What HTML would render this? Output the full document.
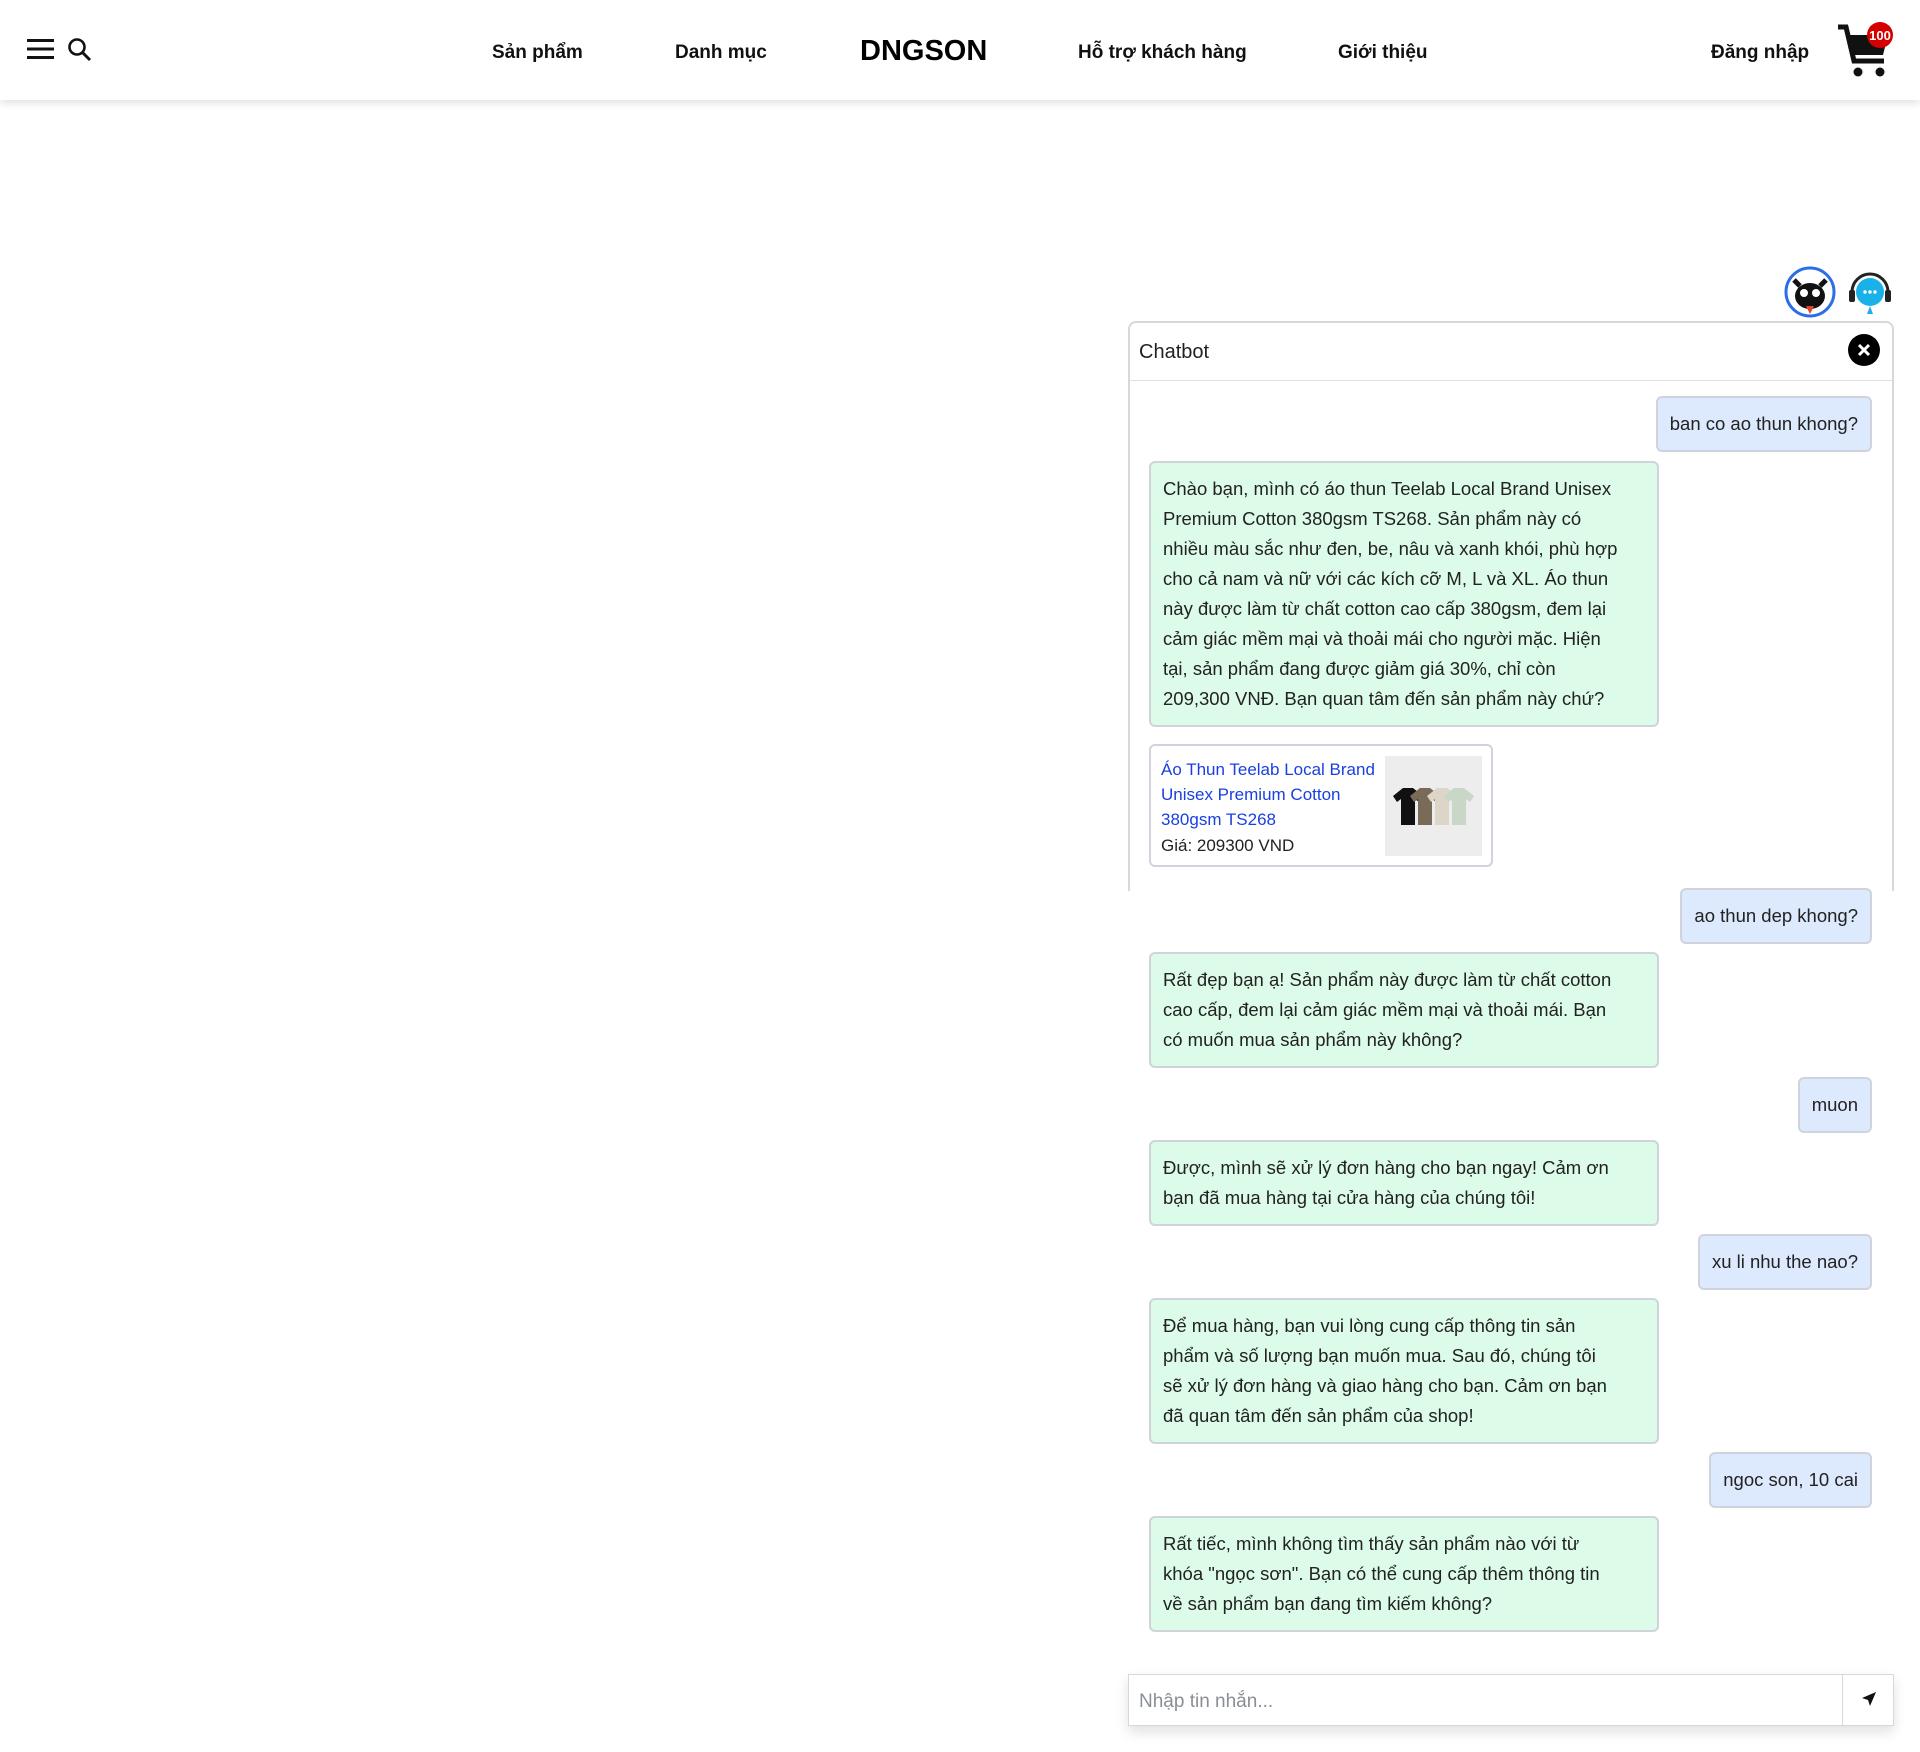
<!DOCTYPE html>
<html><head><meta charset="utf-8">
<style>
*{margin:0;padding:0;box-sizing:border-box}
body{width:1920px;height:1752px;background:#fff;font-family:"Liberation Sans",sans-serif;color:#212529;position:relative;overflow:hidden}
.hdr{position:absolute;left:0;top:0;width:1920px;height:100px;background:#fff;box-shadow:0 3px 8px rgba(0,0,0,.12)}
.nav{position:absolute;top:42px;font-size:19px;font-weight:bold;color:#111;white-space:nowrap}
.abs{position:absolute}
.panel{position:absolute;left:1128px;top:321px;width:766px;height:570px;border:2px solid #d6d8de;border-bottom:none;border-radius:8px 8px 0 0}
.b{position:absolute;font-size:18.5px;line-height:30px;padding:11px 12px;border:2px solid #cfd3dc;border-radius:6px;white-space:nowrap;color:#222}
.bot{background:#dcfbe8;left:1149px;width:510px}
.usr{background:#dde9fd;right:48px}
</style></head><body>
<div class="hdr"></div>
<svg class="abs" style="left:27px;top:38px" width="27" height="22" viewBox="0 0 27 22"><rect y="1" width="27" height="3" fill="#111"/><rect y="9.5" width="27" height="3" fill="#111"/><rect y="18" width="27" height="3" fill="#111"/></svg>
<svg class="abs" style="left:67px;top:37px" width="26" height="26" viewBox="0 0 26 26"><circle cx="10" cy="10" r="7.5" fill="none" stroke="#111" stroke-width="2.6"/><line x1="15.5" y1="15.5" x2="23" y2="23" stroke="#111" stroke-width="3"/></svg>
<div class="nav" style="left:492px">Sản phẩm</div>
<div class="nav" style="left:675px">Danh mục</div>
<div class="nav" style="left:860px;top:35px;font-size:29px;font-weight:600;color:#000">DNGSON</div>
<div class="nav" style="left:1078px">Hỗ trợ khách hàng</div>
<div class="nav" style="left:1338px">Giới thiệu</div>
<div class="nav" style="left:1711px">Đăng nhập</div>
<svg class="abs" style="left:1836px;top:22px" width="60" height="58" viewBox="0 0 60 58"><path d="M2 5h8l8 34h30" fill="none" stroke="#111" stroke-width="5"/><path d="M12 13h40l-5 20H17z" fill="#111"/><circle cx="22" cy="50" r="4.5" fill="#111"/><circle cx="44" cy="50" r="4.5" fill="#111"/><circle cx="44" cy="13" r="13" fill="#d40000"/><text x="44" y="18" font-size="13" font-weight="bold" fill="#fff" text-anchor="middle" font-family="Liberation Sans">100</text></svg>
<svg class="abs" style="left:1784px;top:266px" width="52" height="52" viewBox="0 0 52 52"><circle cx="26" cy="26" r="24" fill="#fff" stroke="#2b6fe6" stroke-width="3"/><path d="M10 14l6 6M42 14l-6 6" stroke="#111" stroke-width="5"/><ellipse cx="26" cy="30" rx="15" ry="13" fill="#111"/><circle cx="20" cy="27" r="4" fill="#fff"/><circle cx="32" cy="27" r="4" fill="#fff"/><path d="M22 40l4 8 4-8z" fill="#e0442a"/></svg>
<svg class="abs" style="left:1846px;top:268px" width="48" height="48" viewBox="0 0 48 48"><path d="M6 24a18 18 0 0 1 36 0" fill="none" stroke="#222" stroke-width="3"/><rect x="3" y="22" width="6" height="12" rx="2" fill="#222"/><rect x="39" y="22" width="6" height="12" rx="2" fill="#222"/><circle cx="24" cy="24" r="14" fill="#1ab0e8"/><path d="M24 38l-3 8h6z" fill="#1ab0e8"/><circle cx="19" cy="24" r="1.7" fill="#fff"/><circle cx="24" cy="24" r="1.7" fill="#fff"/><circle cx="29" cy="24" r="1.7" fill="#fff"/></svg>
<div class="panel"></div>
<div class="abs" style="left:1130px;top:380px;width:762px;height:1px;background:#dfe1e5"></div>
<div class="abs" style="left:1139px;top:341px;font-size:20px;color:#222">Chatbot</div>
<svg class="abs" style="left:1848px;top:334px" width="32" height="32" viewBox="0 0 32 32"><circle cx="16" cy="16" r="16" fill="#000"/><path d="M11 11l10 10M21 11l-10 10" stroke="#fff" stroke-width="3"/></svg>

<div class="b usr" style="top:396px">ban co ao thun khong?</div>
<div class="b bot" style="top:461px">Chào bạn, mình có áo thun Teelab Local Brand Unisex<br>Premium Cotton 380gsm TS268. Sản phẩm này có<br>nhiều màu sắc như đen, be, nâu và xanh khói, phù hợp<br>cho cả nam và nữ với các kích cỡ M, L và XL. Áo thun<br>này được làm từ chất cotton cao cấp 380gsm, đem lại<br>cảm giác mềm mại và thoải mái cho người mặc. Hiện<br>tại, sản phẩm đang được giảm giá 30%, chỉ còn<br>209,300 VNĐ. Bạn quan tâm đến sản phẩm này chứ?</div>
<div class="abs" style="left:1149px;top:744px;width:344px;height:123px;border:2px solid #cfd3dc;border-radius:6px;background:#fff"></div>
<div class="abs" style="left:1161px;top:757px;font-size:17px;line-height:25px;color:#1a3fe0;white-space:nowrap">Áo Thun Teelab Local Brand<br>Unisex Premium Cotton<br>380gsm TS268</div>
<div class="abs" style="left:1161px;top:833px;font-size:17px;line-height:25px;color:#222">Giá: 209300 VND</div>
<svg class="abs" style="left:1385px;top:756px" width="97" height="100" viewBox="0 0 97 100"><rect width="97" height="100" fill="#ededed"/><path d="M8 40l10-8h10l10 8-4 6-4-3v26H16V43l-4 3z" fill="#111"/><path d="M25 40l10-8h10l10 8-4 6-4-3v26H33V43l-4 3z" fill="#7a6a58"/><path d="M42 40l10-8h10l10 8-4 6-4-3v26H50V43l-4 3z" fill="#ddd5c8"/><path d="M59 40l10-8h10l10 8-4 6-4-3v26H67V43l-4 3z" fill="#c9d8c6"/></svg>

<div class="b usr" style="top:888px">ao thun dep khong?</div>
<div class="b bot" style="top:952px">Rất đẹp bạn ạ! Sản phẩm này được làm từ chất cotton<br>cao cấp, đem lại cảm giác mềm mại và thoải mái. Bạn<br>có muốn mua sản phẩm này không?</div>
<div class="b usr" style="top:1077px">muon</div>
<div class="b bot" style="top:1140px">Được, mình sẽ xử lý đơn hàng cho bạn ngay! Cảm ơn<br>bạn đã mua hàng tại cửa hàng của chúng tôi!</div>
<div class="b usr" style="top:1234px">xu li nhu the nao?</div>
<div class="b bot" style="top:1298px">Để mua hàng, bạn vui lòng cung cấp thông tin sản<br>phẩm và số lượng bạn muốn mua. Sau đó, chúng tôi<br>sẽ xử lý đơn hàng và giao hàng cho bạn. Cảm ơn bạn<br>đã quan tâm đến sản phẩm của shop!</div>
<div class="b usr" style="top:1452px">ngoc son, 10 cai</div>
<div class="b bot" style="top:1516px">Rất tiếc, mình không tìm thấy sản phẩm nào với từ<br>khóa "ngọc sơn". Bạn có thể cung cấp thêm thông tin<br>về sản phẩm bạn đang tìm kiếm không?</div>

<div class="abs" style="left:1128px;top:1674px;width:766px;height:52px;border:1px solid #d6d8de;background:#fff;box-shadow:0 6px 12px rgba(0,0,0,.12)"></div>
<div class="abs" style="left:1139px;top:1691px;font-size:19px;color:#8a8f96">Nhập tin nhắn...</div>
<div class="abs" style="left:1842px;top:1675px;width:1px;height:50px;background:#d6d8de"></div>
<svg class="abs" style="left:1860px;top:1690px" width="18" height="18" viewBox="0 0 18 18"><path d="M16 2L2 8l6 2 2 6z" fill="#111"/></svg>
</body></html>
